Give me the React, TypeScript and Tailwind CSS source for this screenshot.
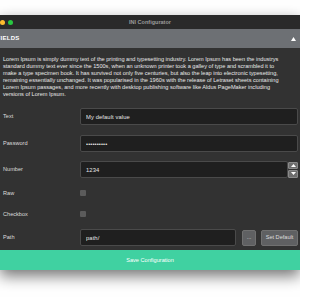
import React from "react";

const font = { fontFamily: '"Liberation Sans", Arial, sans-serif' };

function Label({ children }: { children: React.ReactNode }) {
  return <div className="w-[80px] shrink-0 pl-[3px] text-[5.6px] text-[#dcdcdc]">{children}</div>;
}

function Field({ type = "text", value }: { type?: string; value: string }) {
  return (
    <input
      type={type}
      readOnly
      defaultValue={value}
      className="block h-[17px] w-full min-w-0 rounded-[2px] border border-[#4a4a4a] bg-[#1f1f1f] pl-[5px] text-[5.8px] tracking-[0.1px] text-[#e6e6e6] outline-none"
    />
  );
}

export default function App() {
  const lorem =
    "Lorem Ipsum is simply dummy text of the printing and typesetting industry. Lorem Ipsum has been the industrys standard dummy text ever since the 1500s, when an unknown printer took a galley of type and scrambled it to make a type specimen book. It has survived not only five centuries, but also the leap into electronic typesetting, remaining essentially unchanged. It was popularised in the 1960s with the release of Letraset sheets containing Lorem Ipsum passages, and more recently with desktop publishing software like Aldus PageMaker including versions of Lorem Ipsum.";

  return (
    <div className="h-[300px] w-[300px] overflow-hidden bg-white" style={font}>
      <div className="mt-[15px] flex flex-col bg-[#323232] shadow-[0_6px_14px_rgba(0,0,0,0.55)]">
        {/* title bar */}
        <div className="grid h-[14px] grid-cols-[1fr_auto_1fr] items-center bg-[#2a2a2a]">
          <div className="ml-[-8px] flex items-center gap-[3px]">
            <span className="h-[5px] w-[5px] rounded-full bg-[#fe5f57]" />
            <span className="h-[5px] w-[5px] rounded-full bg-[#febc2e]" />
            <span className="h-[5px] w-[5px] rounded-full bg-[#28c840]" />
          </div>
          <div className="text-[5.5px] font-bold text-[#9b9b9b]">INI Configurator</div>
          <div />
        </div>

        {/* section header */}
        <div className="flex h-[19px] items-center justify-between bg-[#6d7074] pr-[4px]">
          <span className="ml-[-3.5px] text-[6px] font-bold tracking-[0.3px] text-white">FIELDS</span>
          <svg width="5" height="4" viewBox="0 0 5 4">
            <path d="M2.5 0 L5 4 L0 4 Z" fill="#fff" />
          </svg>
        </div>

        {/* body */}
        <div className="flex flex-col pr-[2px]">
          <p className="pl-[3px] pr-[17px] pt-[7.5px] text-[5.6px] leading-[7px] text-[#e8e8e8]">{lorem}</p>

          <div className="mt-[10.5px] flex items-center">
            <Label>Text</Label>
            <Field value="My default value" />
          </div>

          <div className="mt-[10px] flex items-center">
            <Label>Password</Label>
            <Field type="password" value="**********" />
          </div>

          <div className="mt-[9px] flex items-center">
            <Label>Number</Label>
            <div className="flex h-[17px] w-full items-stretch">
              <Field value="1234" />
              <div className="flex w-[10px] shrink-0 flex-col gap-[1px] py-[0.5px]">
                <div className="flex flex-1 items-center justify-center rounded-[1px] border border-[#8a8a8a] bg-[#6e6e6e]">
                  <svg width="5" height="3" viewBox="0 0 5 3">
                    <path d="M2.5 0 L5 3 L0 3 Z" fill="#fff" />
                  </svg>
                </div>
                <div className="flex flex-1 items-center justify-center rounded-[1px] border border-[#8a8a8a] bg-[#6e6e6e]">
                  <svg width="5" height="3" viewBox="0 0 5 3">
                    <path d="M0 0 L5 0 L2.5 3 Z" fill="#fff" />
                  </svg>
                </div>
              </div>
            </div>
          </div>

          <div className="mt-[12px] flex h-[6px] items-center">
            <Label>Raw</Label>
            <span className="h-[6px] w-[6px] rounded-[1px] bg-[#5b5b5b]" />
          </div>

          <div className="mt-[15px] flex h-[6px] items-center">
            <Label>Checkbox</Label>
            <span className="h-[6px] w-[6px] rounded-[1px] bg-[#5b5b5b]" />
          </div>

          <div className="mt-[12px] flex items-center">
            <Label>Path</Label>
            <div className="flex w-full items-center gap-[5px]">
              <div className="mr-[1px] flex-1">
                <Field value="path/" />
              </div>
              <button className="flex h-[16px] w-[14px] shrink-0 items-center justify-center rounded-[2px] border border-[#707070] bg-[#5f6062] text-[5.6px] text-[#dddddd]">
                ...
              </button>
              <button className="flex h-[16px] w-[37px] shrink-0 items-center justify-center whitespace-nowrap rounded-[2px] border border-[#707070] bg-[#5f6062] text-[5.6px] text-[#dddddd]">
                Set Default
              </button>
            </div>
          </div>

          <div className="mt-[4px]" />
        </div>

        <button className="flex h-[20px] w-full items-center justify-center bg-[#40d1a1] text-[5.6px] text-white">
          Save Configuration
        </button>
      </div>
    </div>
  );
}
